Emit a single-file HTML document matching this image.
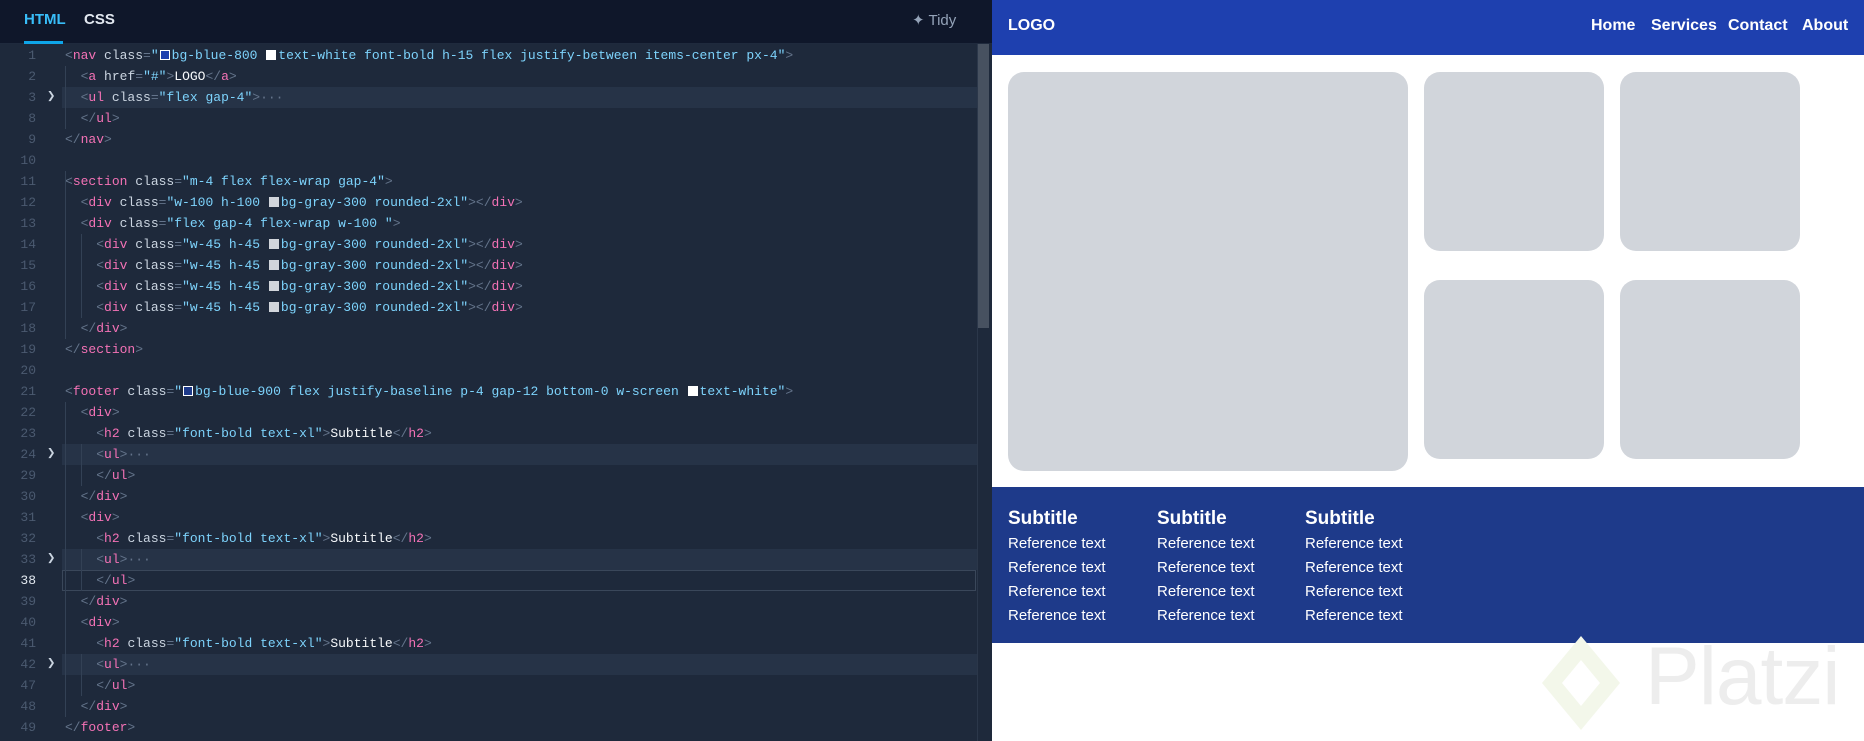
<!DOCTYPE html>
<html><head><meta charset="utf-8"><style>
*{margin:0;padding:0;box-sizing:border-box}
body{width:1864px;height:741px;overflow:hidden;background:#fff;font-family:"Liberation Sans",sans-serif;position:relative}
#ed{position:absolute;left:0;top:0;width:992px;height:741px;background:#1e293b}
#top{position:absolute;left:0;top:0;width:992px;height:44px;background:#0f172a;border-bottom:1px solid #1f2a3d}
.tab{position:absolute;top:11px;font-size:15px;font-weight:bold;color:#e2e8f0}
#code{position:absolute;left:0;top:45px;width:977px;font-family:"Liberation Mono",monospace;font-size:13px}
.l{position:relative;height:21px;line-height:21px;white-space:pre;color:#cbd5e1}
.l.f::before{content:"";position:absolute;left:62px;right:0;top:0;bottom:0;background:#263347}
.l.cur::before{content:"";position:absolute;left:62px;right:1px;top:0;bottom:0;border:1px solid #3a475a}
.n{position:absolute;left:0;width:36px;text-align:right;color:#4b5a70}
.cur .n{color:#e2e8f0}
.c{position:absolute;left:65px}
.chev{position:absolute;left:47px;top:0;color:#cbd5e1;font-size:14px}
.t{color:#f472b6}.p{color:#64748b}.v{color:#7dd3fc}.w{color:#f8fafc}
.sw{display:inline-block;width:10px;height:10px;margin:0 2px -1px 1px;border:1px solid #fff}
.g{position:absolute;top:0;bottom:0;border-left:1px solid #334155}
#sb{position:absolute;left:977px;top:44px;width:12px;height:697px;background:#1e293b;border-left:1px solid #2b374a}
#th{position:absolute;left:978px;top:44px;width:11px;height:284px;background:#475160}
#nav{position:absolute;left:992px;top:0;width:872px;height:55px;background:#1e40af;color:#fff;font-weight:bold;font-size:16px}
#nav span{position:absolute;top:17px}
.b{position:absolute;background:#d1d5db;border-radius:16px}
#ft{position:absolute;left:992px;top:487px;width:872px;height:156px;background:#1e3a8a;color:#fff}
.col{position:absolute;top:20px}
.col h2{font-size:19px;font-weight:bold;line-height:24px;margin-bottom:1px}
.col div{font-size:15px;line-height:24px}
</style></head><body>
<div id="ed">
<div id="top">
<span class="tab" style="left:24px;color:#38bdf8">HTML</span>
<div style="position:absolute;left:24px;top:41px;width:39px;height:3px;background:#0ea5e9"></div>
<span class="tab" style="left:84px">CSS</span>
<span style="position:absolute;left:912px;top:11px;font-size:15px;color:#94a3b8">✦ Tidy</span>
</div>
<div id="code">
<div class="l"><span class="n">1</span><span class="c"><span class="p">&lt;</span><span class="t">nav</span> class<span class="p">=</span><span class="v">"<span class="sw" style="background:#1e40af"></span>bg-blue-800 <span class="sw" style="background:#fff"></span>text-white font-bold h-15 flex justify-between items-center px-4"</span><span class="p">&gt;</span></span></div>
<div class="l"><span class="n">2</span><span class="c">  <span class="p">&lt;</span><span class="t">a</span> href<span class="p">=</span><span class="v">"#"</span><span class="p">&gt;</span><span class="w">LOGO</span><span class="p">&lt;/</span><span class="t">a</span><span class="p">&gt;</span></span></div>
<div class="l f"><span class="n">3</span><span class="chev">❯</span><span class="c">  <span class="p">&lt;</span><span class="t">ul</span> class<span class="p">=</span><span class="v">"flex gap-4"</span><span class="p">&gt;···</span></span></div>
<div class="l"><span class="n">8</span><span class="c">  <span class="p">&lt;/</span><span class="t">ul</span><span class="p">&gt;</span></span></div>
<div class="l"><span class="n">9</span><span class="c"><span class="p">&lt;/</span><span class="t">nav</span><span class="p">&gt;</span></span></div>
<div class="l"><span class="n">10</span></div>
<div class="l"><span class="n">11</span><span class="c"><span class="p">&lt;</span><span class="t">section</span> class<span class="p">=</span><span class="v">"m-4 flex flex-wrap gap-4"</span><span class="p">&gt;</span></span></div>
<div class="l"><span class="n">12</span><span class="c">  <span class="p">&lt;</span><span class="t">div</span> class<span class="p">=</span><span class="v">"w-100 h-100 <span class="sw" style="background:#d1d5db;border-color:#d1d5db"></span>bg-gray-300 rounded-2xl"</span><span class="p">&gt;&lt;/</span><span class="t">div</span><span class="p">&gt;</span></span></div>
<div class="l"><span class="n">13</span><span class="c">  <span class="p">&lt;</span><span class="t">div</span> class<span class="p">=</span><span class="v">"flex gap-4 flex-wrap w-100 "</span><span class="p">&gt;</span></span></div>
<div class="l"><span class="n">14</span><span class="c">    <span class="p">&lt;</span><span class="t">div</span> class<span class="p">=</span><span class="v">"w-45 h-45 <span class="sw" style="background:#d1d5db;border-color:#d1d5db"></span>bg-gray-300 rounded-2xl"</span><span class="p">&gt;&lt;/</span><span class="t">div</span><span class="p">&gt;</span></span></div>
<div class="l"><span class="n">15</span><span class="c">    <span class="p">&lt;</span><span class="t">div</span> class<span class="p">=</span><span class="v">"w-45 h-45 <span class="sw" style="background:#d1d5db;border-color:#d1d5db"></span>bg-gray-300 rounded-2xl"</span><span class="p">&gt;&lt;/</span><span class="t">div</span><span class="p">&gt;</span></span></div>
<div class="l"><span class="n">16</span><span class="c">    <span class="p">&lt;</span><span class="t">div</span> class<span class="p">=</span><span class="v">"w-45 h-45 <span class="sw" style="background:#d1d5db;border-color:#d1d5db"></span>bg-gray-300 rounded-2xl"</span><span class="p">&gt;&lt;/</span><span class="t">div</span><span class="p">&gt;</span></span></div>
<div class="l"><span class="n">17</span><span class="c">    <span class="p">&lt;</span><span class="t">div</span> class<span class="p">=</span><span class="v">"w-45 h-45 <span class="sw" style="background:#d1d5db;border-color:#d1d5db"></span>bg-gray-300 rounded-2xl"</span><span class="p">&gt;&lt;/</span><span class="t">div</span><span class="p">&gt;</span></span></div>
<div class="l"><span class="n">18</span><span class="c">  <span class="p">&lt;/</span><span class="t">div</span><span class="p">&gt;</span></span></div>
<div class="l"><span class="n">19</span><span class="c"><span class="p">&lt;/</span><span class="t">section</span><span class="p">&gt;</span></span></div>
<div class="l"><span class="n">20</span></div>
<div class="l"><span class="n">21</span><span class="c"><span class="p">&lt;</span><span class="t">footer</span> class<span class="p">=</span><span class="v">"<span class="sw" style="background:#1e3a8a"></span>bg-blue-900 flex justify-baseline p-4 gap-12 bottom-0 w-screen <span class="sw" style="background:#fff"></span>text-white"</span><span class="p">&gt;</span></span></div>
<div class="l"><span class="n">22</span><span class="c">  <span class="p">&lt;</span><span class="t">div</span><span class="p">&gt;</span></span></div>
<div class="l"><span class="n">23</span><span class="c">    <span class="p">&lt;</span><span class="t">h2</span> class<span class="p">=</span><span class="v">"font-bold text-xl"</span><span class="p">&gt;</span><span class="w">Subtitle</span><span class="p">&lt;/</span><span class="t">h2</span><span class="p">&gt;</span></span></div>
<div class="l f"><span class="n">24</span><span class="chev">❯</span><span class="c">    <span class="p">&lt;</span><span class="t">ul</span><span class="p">&gt;···</span></span></div>
<div class="l"><span class="n">29</span><span class="c">    <span class="p">&lt;/</span><span class="t">ul</span><span class="p">&gt;</span></span></div>
<div class="l"><span class="n">30</span><span class="c">  <span class="p">&lt;/</span><span class="t">div</span><span class="p">&gt;</span></span></div>
<div class="l"><span class="n">31</span><span class="c">  <span class="p">&lt;</span><span class="t">div</span><span class="p">&gt;</span></span></div>
<div class="l"><span class="n">32</span><span class="c">    <span class="p">&lt;</span><span class="t">h2</span> class<span class="p">=</span><span class="v">"font-bold text-xl"</span><span class="p">&gt;</span><span class="w">Subtitle</span><span class="p">&lt;/</span><span class="t">h2</span><span class="p">&gt;</span></span></div>
<div class="l f"><span class="n">33</span><span class="chev">❯</span><span class="c">    <span class="p">&lt;</span><span class="t">ul</span><span class="p">&gt;···</span></span></div>
<div class="l cur"><span class="n">38</span><span class="c">    <span class="p">&lt;/</span><span class="t">ul</span><span class="p">&gt;</span></span></div>
<div class="l"><span class="n">39</span><span class="c">  <span class="p">&lt;/</span><span class="t">div</span><span class="p">&gt;</span></span></div>
<div class="l"><span class="n">40</span><span class="c">  <span class="p">&lt;</span><span class="t">div</span><span class="p">&gt;</span></span></div>
<div class="l"><span class="n">41</span><span class="c">    <span class="p">&lt;</span><span class="t">h2</span> class<span class="p">=</span><span class="v">"font-bold text-xl"</span><span class="p">&gt;</span><span class="w">Subtitle</span><span class="p">&lt;/</span><span class="t">h2</span><span class="p">&gt;</span></span></div>
<div class="l f"><span class="n">42</span><span class="chev">❯</span><span class="c">    <span class="p">&lt;</span><span class="t">ul</span><span class="p">&gt;···</span></span></div>
<div class="l"><span class="n">47</span><span class="c">    <span class="p">&lt;/</span><span class="t">ul</span><span class="p">&gt;</span></span></div>
<div class="l"><span class="n">48</span><span class="c">  <span class="p">&lt;/</span><span class="t">div</span><span class="p">&gt;</span></span></div>
<div class="l"><span class="n">49</span><span class="c"><span class="p">&lt;/</span><span class="t">footer</span><span class="p">&gt;</span></span></div>
</div>
<div class="g" style="left:65px;top:66px;height:63px"></div>
<div class="g" style="left:65px;top:171px;height:168px"></div>
<div class="g" style="left:81px;top:234px;height:84px"></div>
<div class="g" style="left:65px;top:402px;height:315px"></div>
<div class="g" style="left:81px;top:444px;height:42px"></div>
<div class="g" style="left:81px;top:549px;height:42px"></div>
<div class="g" style="left:81px;top:654px;height:42px"></div>
<div id="sb"></div><div id="th"></div>
</div>
<div id="nav"><span style="left:16px">LOGO</span><span style="left:599px">Home</span><span style="left:659px">Services</span><span style="left:736px">Contact</span><span style="left:810px">About</span></div>
<div class="b" style="left:1008px;top:72px;width:400px;height:399px"></div>
<div class="b" style="left:1424px;top:72px;width:180px;height:179px"></div>
<div class="b" style="left:1620px;top:72px;width:180px;height:179px"></div>
<div class="b" style="left:1424px;top:280px;width:180px;height:179px"></div>
<div class="b" style="left:1620px;top:280px;width:180px;height:179px"></div>
<div id="ft">
<div class="col" style="left:16px"><h2>Subtitle</h2><div>Reference text</div><div>Reference text</div><div>Reference text</div><div>Reference text</div></div>
<div class="col" style="left:165px"><h2>Subtitle</h2><div>Reference text</div><div>Reference text</div><div>Reference text</div><div>Reference text</div></div>
<div class="col" style="left:313px"><h2>Subtitle</h2><div>Reference text</div><div>Reference text</div><div>Reference text</div><div>Reference text</div></div>
</div>
<svg style="position:absolute;left:1536px;top:630px" width="90" height="106"><path d="M45 6 L84 53 L45 100 L6 53 Z M45 30 L26 53 L45 76 L64 53 Z" fill="#f3f7ea" fill-rule="evenodd"/></svg>
<div style="position:absolute;left:1645px;top:630px;font-size:82px;color:#ededed;font-family:'Liberation Sans',sans-serif;letter-spacing:-1px">Platzi</div>
</body></html>
